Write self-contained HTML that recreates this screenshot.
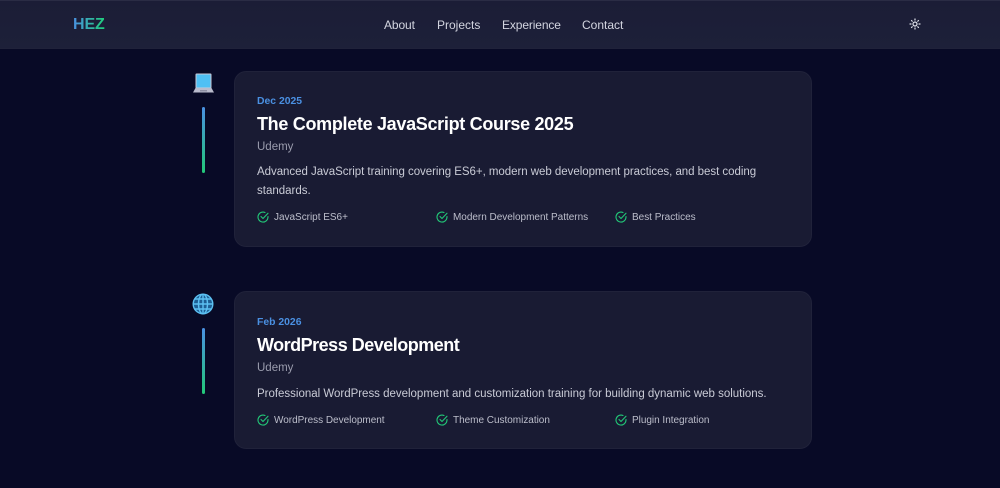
<!DOCTYPE html>
<html><head><meta charset="utf-8"><style>
*{box-sizing:border-box;margin:0;padding:0}
html,body{width:1000px;height:488px;overflow:hidden;background:#080a26;font-family:"Liberation Sans",sans-serif}
.t{position:absolute;white-space:nowrap;line-height:1}
nav{position:absolute;left:0;top:0;width:1000px;height:49px;background:linear-gradient(180deg,#1b1d36,#1d2039);border-bottom:1px solid #20223a;border-top:1px solid #2a2c44}
.nl{color:#d3d5e0;font-size:12px;top:19px}
.card{position:absolute;left:234px;width:578px;background:#191b33;border:1px solid #20223a;border-radius:12px}
.date{color:#4a90e2;font-size:10.4px;font-weight:bold;left:257px}
.h{color:#fff;font-size:18px;font-weight:bold;left:257px;letter-spacing:-.31px}
.u{color:#9a9cad;font-size:11.5px;left:257px}
.d{color:#c9cbd6;font-size:11.5px;left:257px}
.f{color:#bcbecb;font-size:10px;letter-spacing:-.02px}
.bar{position:absolute;left:202px;width:3px;height:66px;border-radius:2px;background:linear-gradient(180deg,#4a90e2,#22c878)}
svg{position:absolute}
</style></head><body>
<nav></nav>
<div class="t" style="left:73px;top:17px;font-size:16px;font-weight:bold;letter-spacing:-.1px;background:linear-gradient(90deg,#4a90e2,#1fd07a);-webkit-background-clip:text;background-clip:text;color:transparent">HEZ</div>
<div class="t nl" style="left:384px;letter-spacing:-.1px">About</div>
<div class="t nl" style="left:437px">Projects</div>
<div class="t nl" style="left:502px;letter-spacing:-.12px">Experience</div>
<div class="t nl" style="left:582px">Contact</div>
<svg style="left:909px;top:18px" width="12" height="12" viewBox="0 0 24 24" fill="none" stroke="#dfe1ea" stroke-width="2.400" stroke-linecap="round"><circle cx="12" cy="12" r="4"/><path d="M12 2v2M12 20v2M2 12h2M20 12h2M5 5l1.500 1.500M17.500 17.500L19 19M5 19l1.500-1.500M17.500 6.500L19 5"/></svg>

<svg style="left:192px;top:72px" width="23" height="23" viewBox="0 0 23 23"><rect x="3.500" y="1.500" width="16" height="15" rx="1" fill="#c9cbd8"/><rect x="4.500" y="2.500" width="14" height="13" fill="#4fc0f4"/><path d="M3.500 16h16l2.500 4.500H1z" fill="#b9bbcc"/><rect x="8" y="18" width="7" height="1.500" fill="#8e90a4"/></svg>
<div class="bar" style="top:107px"></div>
<svg style="left:192px;top:293px" width="22" height="22" viewBox="0 0 22 22" fill="none" stroke="#5cc0f2" stroke-width="1.400"><circle cx="11" cy="11" r="9.800" fill="#1d5f94"/><ellipse cx="11" cy="11" rx="4.500" ry="9.800"/><path d="M11 1.200v19.600M1.200 11h19.600M3 6h16M3 16h16"/></svg>
<div class="bar" style="top:328px"></div>

<div class="card" style="top:71px;height:176px"></div>
<div class="t date" style="top:97px">Dec 2025</div>
<div class="t h" style="top:115px">The Complete JavaScript Course 2025</div>
<div class="t u" style="top:142px">Udemy</div>
<div class="t d" style="top:167px;letter-spacing:-.04px">Advanced JavaScript training covering ES6+, modern web development practices, and best coding</div>
<div class="t d" style="top:186px">standards.</div>
<svg style="left:257px;top:211px" width="12" height="12" viewBox="0 0 24 24" fill="none" stroke="#22c878" stroke-width="2.200" stroke-linecap="round" stroke-linejoin="round"><path d="M22 11v1a10 10 0 1 1-6-9.100"/><path d="M8 11l4 4L22 4.500"/></svg>
<div class="t f" style="left:274px;top:213px">JavaScript ES6+</div>
<svg style="left:436px;top:211px" width="12" height="12" viewBox="0 0 24 24" fill="none" stroke="#22c878" stroke-width="2.200" stroke-linecap="round" stroke-linejoin="round"><path d="M22 11v1a10 10 0 1 1-6-9.100"/><path d="M8 11l4 4L22 4.500"/></svg>
<div class="t f" style="left:453px;top:213px">Modern Development Patterns</div>
<svg style="left:615px;top:211px" width="12" height="12" viewBox="0 0 24 24" fill="none" stroke="#22c878" stroke-width="2.200" stroke-linecap="round" stroke-linejoin="round"><path d="M22 11v1a10 10 0 1 1-6-9.100"/><path d="M8 11l4 4L22 4.500"/></svg>
<div class="t f" style="left:632px;top:213px">Best Practices</div>

<div class="card" style="top:291px;height:158px"></div>
<div class="t date" style="top:318px">Feb 2026</div>
<div class="t h" style="top:336px;letter-spacing:-.5px">WordPress Development</div>
<div class="t u" style="top:363px">Udemy</div>
<div class="t d" style="top:389px;letter-spacing:-.01px">Professional WordPress development and customization training for building dynamic web solutions.</div>
<svg style="left:257px;top:414px" width="12" height="12" viewBox="0 0 24 24" fill="none" stroke="#22c878" stroke-width="2.200" stroke-linecap="round" stroke-linejoin="round"><path d="M22 11v1a10 10 0 1 1-6-9.100"/><path d="M8 11l4 4L22 4.500"/></svg>
<div class="t f" style="left:274px;top:416px">WordPress Development</div>
<svg style="left:436px;top:414px" width="12" height="12" viewBox="0 0 24 24" fill="none" stroke="#22c878" stroke-width="2.200" stroke-linecap="round" stroke-linejoin="round"><path d="M22 11v1a10 10 0 1 1-6-9.100"/><path d="M8 11l4 4L22 4.500"/></svg>
<div class="t f" style="left:453px;top:416px">Theme Customization</div>
<svg style="left:615px;top:414px" width="12" height="12" viewBox="0 0 24 24" fill="none" stroke="#22c878" stroke-width="2.200" stroke-linecap="round" stroke-linejoin="round"><path d="M22 11v1a10 10 0 1 1-6-9.100"/><path d="M8 11l4 4L22 4.500"/></svg>
<div class="t f" style="left:632px;top:416px">Plugin Integration</div>
</body></html>
